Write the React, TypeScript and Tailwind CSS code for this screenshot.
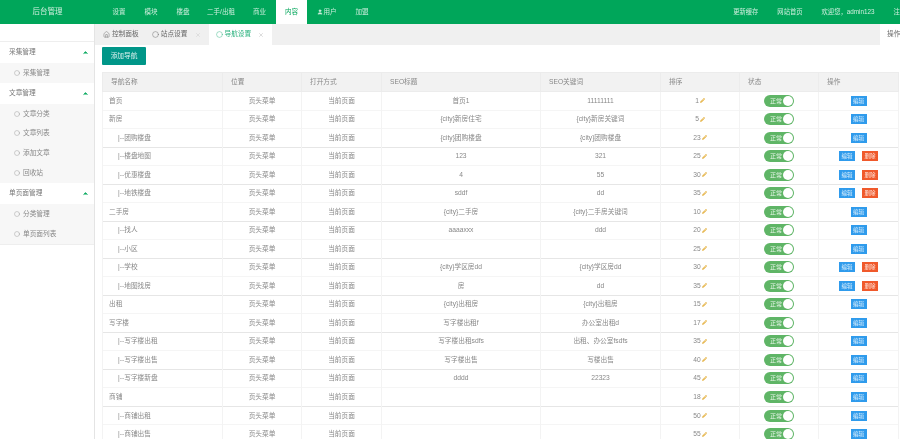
import React from 'react';
import { Home, Circle, X, User, ChevronUp } from 'lucide-react';
import { FaPencilAlt } from 'react-icons/fa';

const navItems = [
  { label: '设置', width: 'w-[32px]' },
  { label: '模块', width: 'w-[32px]' },
  { label: '楼盘', width: 'w-[32px]' },
  { label: '二手/出租', width: 'w-[44px]' },
  { label: '商业', width: 'w-[33px]' },
  { label: '内容', width: 'w-[31px]' },
  { label: '用户', width: 'w-[39px]' },
  { label: '加盟', width: 'w-[32px]' },
];

const sideGroups = [
  { title: '采集管理', items: ['采集管理'] },
  { title: '文章管理', items: ['文章分类', '文章列表', '添加文章', '回收站'] },
  { title: '单页面管理', items: ['分类管理', '单页面列表'] },
];

const columns = ['导航名称', '位置', '打开方式', 'SEO标题', 'SEO关键词', '排序', '状态', '操作'];

interface Row {
  name: string;
  child?: boolean;
  title?: string;
  keyword?: string;
  sort: number;
  del?: boolean;
}

const rows: Row[] = [
  { name: '首页', title: '首页1', keyword: '11111111', sort: 1 },
  { name: '新房', title: '{city}新房住宅', keyword: '{city}新房关键词', sort: 5 },
  { name: '|--团购楼盘', child: true, title: '{city}团购楼盘', keyword: '{city}团购楼盘', sort: 23 },
  { name: '|--楼盘地图', child: true, title: '123', keyword: '321', sort: 25, del: true },
  { name: '|--优惠楼盘', child: true, title: '4', keyword: '55', sort: 30, del: true },
  { name: '|--地铁楼盘', child: true, title: 'sddf', keyword: 'dd', sort: 35, del: true },
  { name: '二手房', title: '{city}二手房', keyword: '{city}二手房关键词', sort: 10 },
  { name: '|--找人', child: true, title: 'aaaaxxx', keyword: 'ddd', sort: 20 },
  { name: '|--小区', child: true, sort: 25 },
  { name: '|--学校', child: true, title: '{city}学区房dd', keyword: '{city}学区房dd', sort: 30, del: true },
  { name: '|--地图找房', child: true, title: '房', keyword: 'dd', sort: 35, del: true },
  { name: '出租', title: '{city}出租房', keyword: '{city}出租房', sort: 15 },
  { name: '写字楼', title: '写字楼出租f', keyword: '办公室出租d', sort: 17 },
  { name: '|--写字楼出租', child: true, title: '写字楼出租sdfs', keyword: '出租、办公室fsdfs', sort: 35 },
  { name: '|--写字楼出售', child: true, title: '写字楼出售', keyword: '写楼出售', sort: 40 },
  { name: '|--写字楼新盘', child: true, title: 'dddd', keyword: '22323', sort: 45 },
  { name: '商铺', sort: 18 },
  { name: '|--商铺出租', child: true, sort: 50 },
  { name: '|--商铺出售', child: true, sort: 55 },
];

const App: React.FC = () => {
  return (
    <div className="w-[900px] h-[439px] overflow-hidden bg-white blur-[0.3px] text-[6.7px] text-[#888] font-['Liberation_Sans','Noto_Sans_CJK_SC',sans-serif]">
      {/* Top bar */}
      <header className="flex h-6 bg-[#00a65a] text-[#cdeedd] text-[6.5px]">
        <div className="w-[95px] flex items-center justify-center text-[7.5px]">后台管理</div>
        <nav className="flex ml-[8px]">
          {navItems.map((item) => (
            <a
              key={item.label}
              href="#"
              className={`flex items-center justify-center gap-px whitespace-nowrap ${item.width} ${
                item.label === '内容' ? 'bg-white text-[#00a65a]' : ''
              }`}
            >
              {item.label === '用户' && <User className="w-[6px] h-[6px] fill-current" />}
              {item.label}
            </a>
          ))}
        </nav>
        <div className="ml-auto flex items-center gap-[19px] whitespace-nowrap mr-[-6px] text-[6.3px]">
          <span>更新缓存</span>
          <span>网站首页</span>
          <span>欢迎您，admin123</span>
          <span>注销</span>
        </div>
      </header>

      <div className="flex h-[415px]">
        {/* Sidebar */}
        <aside className="w-[95px] shrink-0 border-r border-[#e4e4e4] pt-[17px]">
          <div className="border-t border-b border-[#eee]">
            {sideGroups.map((group) => (
              <div key={group.title}>
                <div className="flex items-center justify-between h-[21px] pl-[9px] pr-[5px] bg-white text-[#777]">
                  <span>{group.title}</span>
                  <ChevronUp className="w-[7px] h-[7px] text-[#00a65a] fill-current" strokeWidth={3} />
                </div>
                <ul className="bg-[#f7f7f7]">
                  {group.items.map((item) => (
                    <li key={item} className="flex items-center gap-[3px] h-[19.8px] pl-[14px]">
                      <Circle className="w-[6px] h-[6px]" strokeWidth={1.5} />
                      {item}
                    </li>
                  ))}
                </ul>
              </div>
            ))}
          </div>
        </aside>

        <main className="flex-1 min-w-0">
          {/* Tabs */}
          <div className="flex h-[21px] bg-[#f0f0f0] text-[#666]">
            <div className="flex items-center gap-[2px] pl-[8px] pr-[6px]">
              <Home className="w-[7px] h-[7px]" strokeWidth={1.5} />
              控制面板
            </div>
            <div className="flex items-center gap-[2px] pl-[7px] pr-[8px]">
              <Circle className="w-[7px] h-[7px]" strokeWidth={1.5} />
              站点设置
              <X className="w-[6px] h-[6px] ml-[5px] text-[#ccc]" />
            </div>
            <div className="flex items-center gap-[2px] pl-[7px] pr-[8px] bg-white text-[#2fb380]">
              <Circle className="w-[7px] h-[7px]" strokeWidth={1.5} />
              导航设置
              <X className="w-[6px] h-[6px] ml-[5px] text-[#bbb]" />
            </div>
            <div className="ml-auto flex items-center w-[13px] pl-[7px] box-content bg-white whitespace-nowrap overflow-hidden">
              操作
            </div>
          </div>

          <div className="pl-[7px] pt-[2px]">
            <button className="block w-[44px] h-[18px] bg-[#009688] text-[#d8f0ed] rounded-[1px]">添加导航</button>

            <table className="mt-[7px] w-[796px] table-fixed border-collapse">
              <colgroup>
                <col className="w-[120px]" />
                <col className="w-[79px]" />
                <col className="w-[80px]" />
                <col className="w-[159px]" />
                <col className="w-[120px]" />
                <col className="w-[79px]" />
                <col className="w-[79px]" />
                <col className="w-[80px]" />
              </colgroup>
              <thead>
                <tr className="h-[19px] bg-[#f2f2f2]">
                  {columns.map((col) => (
                    <th key={col} className="pl-[8px] text-left font-normal border border-[#ececec]">
                      {col}
                    </th>
                  ))}
                </tr>
              </thead>
              <tbody>
                {rows.map((row, i) => (
                  <tr
                    key={row.name + i}
                    className={`h-[18.53px] text-center border-b [&>td]:border-x [&>td]:border-[#f3f3f3] ${
                      i > 0 && i % 2 === 0 ? 'border-[#e6e6e6]' : 'border-[#f5f5f5]'
                    }`}
                  >
                    <td className={`text-left whitespace-nowrap ${row.child ? 'pl-[15px]' : 'pl-[6px]'}`}>{row.name}</td>
                    <td>页头菜单</td>
                    <td>当前页面</td>
                    <td>{row.title}</td>
                    <td>{row.keyword}</td>
                    <td>
                      <span className="inline-flex items-center gap-px">
                        {row.sort}
                        <FaPencilAlt className="w-[5px] h-[5px] text-[#e6b54a]" />
                      </span>
                    </td>
                    <td className="leading-none">
                      <span className="inline-flex items-center justify-between w-[30px] h-[12px] pl-[6px] pr-px rounded-full bg-[#5fb566] text-[#e6f5e7] text-[6px] whitespace-nowrap align-middle">
                        正常
                        <span className="w-[10px] h-[10px] rounded-full bg-white" />
                      </span>
                    </td>
                    <td className="leading-none">
                      <span className="inline-flex items-center justify-center gap-[7px] align-middle">
                        <button className="w-[16px] h-[10px] bg-[#2f9bec] text-[#d9eefc] text-[5.5px] leading-[10px]">编辑</button>
                        {row.del && (
                          <button className="w-[16px] h-[10px] bg-[#f0592b] text-[#fde3da] text-[5.5px] leading-[10px]">删除</button>
                        )}
                      </span>
                    </td>
                  </tr>
                ))}
              </tbody>
            </table>
          </div>
        </main>
      </div>
    </div>
  );
};

export default App;
